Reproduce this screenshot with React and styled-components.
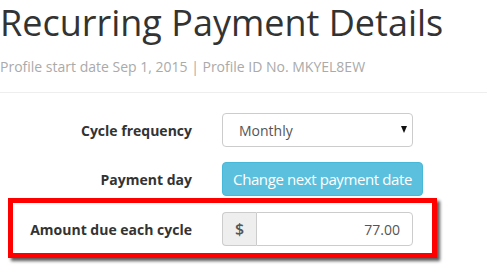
import React from "react";
import styled, { createGlobalStyle } from "styled-components";

const Global = createGlobalStyle`
  html, body { margin: 0; padding: 0; background: #fff; }
  body { font-family: "Open Sans", "Noto Sans", sans-serif; color: #333; }
  * { box-sizing: border-box; }
`;

const Page = styled.div`
  width: 487px;
  min-height: 276px;
`;

const Title = styled.h1`
  margin: 0;
  padding-top: 1px;
  font-size: 36px;
  line-height: 44px;
  font-weight: 400;
  color: #333;
  white-space: nowrap;
`;

const Subtitle = styled.p`
  margin: 12px 0 15px;
  font-size: 14px;
  line-height: 20px;
  color: #aaa;
  white-space: nowrap;
`;

const Rule = styled.hr`
  margin: 0;
  border: 0;
  border-top: 1px solid #eee;
`;

const Form = styled.form`
  padding-top: 20px;
  display: flex;
  flex-direction: column;
  gap: 15px;
`;

const Row = styled.div`
  display: flex;
  align-items: center;
  gap: 30px;
`;

const Highlight = styled(Row)`
  margin: -13px 0 0 8px;
  width: 429px;
  border: 5px solid #f00;
  padding: 9px 0 7px;
  box-shadow: 3px 3px 3px rgba(0, 0, 0, 0.65);
`;

const Label = styled.label`
  width: ${(p) => p.$w || 192}px;
  text-align: right;
  font-size: 14px;
  font-weight: 700;
  color: #333;
  white-space: nowrap;
`;

const Control = styled.div`
  width: 191px;
  height: 34px;
  position: relative;
`;

const Select = styled.select`
  width: 100%;
  height: 34px;
  padding: 0 12px 0 16px;
  border: 1px solid #ccc;
  border-radius: 4px;
  background: #fff;
  font-family: inherit;
  font-size: 14px;
  color: #555;
  appearance: none;
`;

const Caret = styled.span`
  position: absolute;
  right: 6px;
  top: 13px;
  width: 0;
  height: 0;
  border-left: 3.5px solid transparent;
  border-right: 3.5px solid transparent;
  border-top: 7px solid #111;
  pointer-events: none;
`;

const Button = styled.button`
  width: 201px;
  height: 34px;
  padding: 0;
  border: 1px solid #46b8da;
  border-radius: 4px;
  background: #5bc0de;
  color: #fff;
  font-family: inherit;
  font-size: 15px;
  letter-spacing: -0.4px;
  white-space: nowrap;
`;

const Group = styled.div`
  display: flex;
  width: 191px;
  height: 34px;
`;

const Addon = styled.span`
  width: 34px;
  display: flex;
  align-items: center;
  justify-content: center;
  background: #eee;
  border: 1px solid #ccc;
  border-right: 0;
  border-radius: 4px 0 0 4px;
  font-size: 16px;
  font-weight: 600;
  color: #555;
`;

const Input = styled.input`
  flex: 1;
  min-width: 0;
  border: 1px solid #ccc;
  border-radius: 0 4px 4px 0;
  padding: 0 12px;
  text-align: right;
  font-family: inherit;
  font-size: 14px;
  color: #555;
`;

export default function App() {
  return (
    <Page>
      <Global />
      <Title>Recurring Payment Details</Title>
      <Subtitle>Profile start date Sep 1, 2015 | Profile ID No. MKYEL8EW</Subtitle>
      <Rule />
      <Form>
        <Row>
          <Label>Cycle frequency</Label>
          <Control>
            <Select defaultValue="Monthly">
              <option>Monthly</option>
              <option>Weekly</option>
              <option>Yearly</option>
            </Select>
            <Caret />
          </Control>
        </Row>
        <Row>
          <Label>Payment day</Label>
          <Button type="button">Change next payment date</Button>
        </Row>
        <Highlight>
          <Label $w={179}>Amount due each cycle</Label>
          <Group>
            <Addon>$</Addon>
            <Input defaultValue="77.00" />
          </Group>
        </Highlight>
      </Form>
    </Page>
  );
}
